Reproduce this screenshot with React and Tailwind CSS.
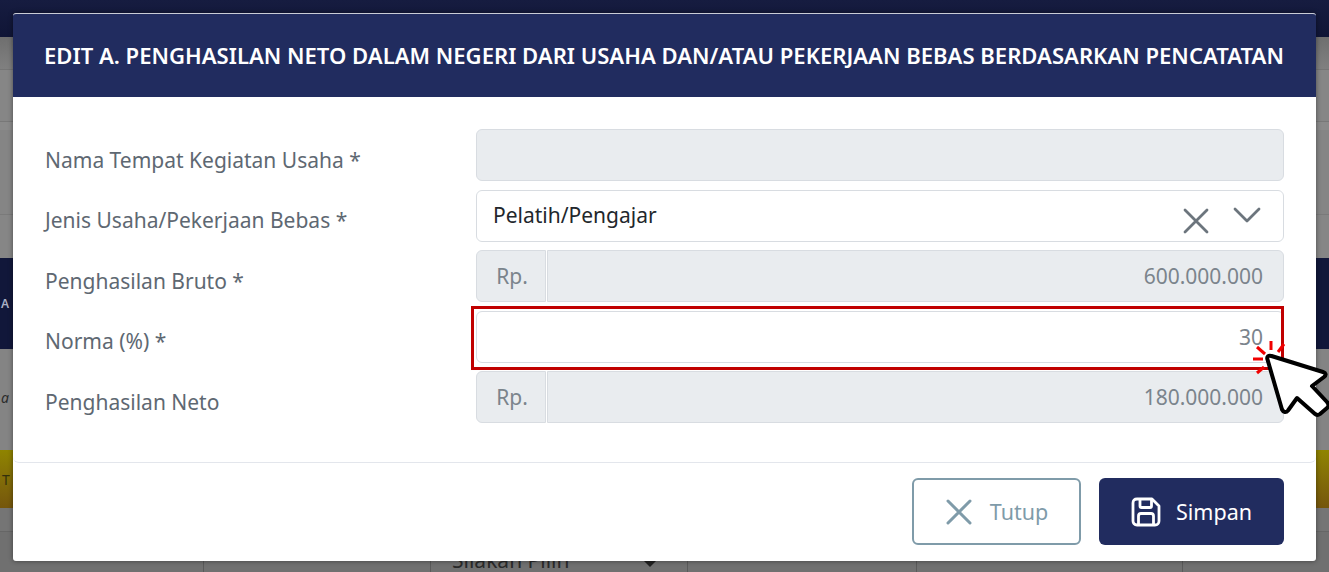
import React from "react";

function Label({ children }) {
  return <div className="h-[52px] flex items-center pt-[11px] text-[21px] text-[#5e6872] w-[431px] shrink-0">{children}</div>;
}

function AmountRow({ label, value }) {
  return (
    <div className="flex h-[60.5px]">
      <Label>{label}</Label>
      <div className="flex flex-1 h-[52px] gap-px">
        <div className="w-[70px] flex items-center justify-center pl-[2px] pt-[2px] bg-[#e9ecef] border border-[#d8dce1] rounded-l-md text-[21px] text-[#7b848c]">Rp.</div>
        <div className="flex-1 flex items-center justify-end pr-[20px] pt-[2px] bg-[#e9ecef] border border-[#d8dce1] rounded-r-md text-[21px] text-[#7b848c]">{value}</div>
      </div>
    </div>
  );
}

function Cursor() {
  return (
    <svg className="absolute left-[1250px] top-[338px]" width="80" height="80" viewBox="0 0 80 80" fill="none">
      <g stroke="#f00000" strokeWidth="3">
        <path d="M21 3V12" />
        <path d="M7 9L15 16" />
        <path d="M3 21H13" />
        <path d="M7 35L14 29" />
        <path d="M34 6L28 14" />
      </g>
      <path
        d="M17.500 21.500C16.500 18.500 18.500 17 21.500 18L73 34C76 35 76.500 37 74 39L62 48L77 64C79 66.500 79 68 77 70L70 76C68 77.500 66.500 77.500 64.500 75.500L47 60L38 72.500C36 75 33.500 74.500 32 71.500Z"
        fill="#fff"
        stroke="#000"
        strokeWidth="4"
        strokeLinejoin="round"
      />
    </svg>
  );
}

export default function App() {
  return (
    <div className="relative w-[1329px] h-[572px] overflow-hidden bg-[#7c7c7c] font-['Noto_Sans','Open_Sans',sans-serif]">
      {/* dimmed page behind the dialog */}
      <div className="flex flex-col h-full overflow-hidden">
        <div className="h-[37px] shrink-0 bg-gradient-to-b from-[#161c40] to-[#101536]" />
        <div className="h-[33px] shrink-0 bg-gradient-to-b from-[#6f6f6f] to-[#808080] border-b border-[#757575]" />
        <div className="h-[52px] shrink-0 bg-[#868686] border-b border-[#787878]" />
        <div className="h-[92px] shrink-0 bg-[#858585] border-t-[8px] border-[#8a8a8a]" />
        <div className="h-[44px] shrink-0 bg-[#868686] border-t border-[#7a7a7a]" />
        <div className="h-[91px] shrink-0 bg-[#11173a] flex items-center pl-px text-[#aab0c4] text-[12px] font-semibold">
          <span>A</span>
        </div>
        <div className="h-[101px] shrink-0 bg-[#848484] flex items-center pl-px text-[#2c2c2c] text-[14px] italic">
          <span className="-mt-[4px]">a</span>
        </div>
        <div className="h-[58px] shrink-0 bg-gradient-to-b from-[#8f8400] to-[#75560c] flex items-center pl-[2px] text-[#33300c] text-[14px]">
          <span>T</span>
        </div>
        <div className="h-[24px] shrink-0 bg-[#757575] border-b border-[#666666]" />
        <div className="flex-1 grid grid-cols-[203px_227px_257px_229px_266px_1fr] bg-[#707070]">
          <div />
          <div className="border-l border-[#5a5a5a]" />
          <div className="border-l border-[#5a5a5a]">
            <div className="pl-[21px] mt-[14px] text-[21px] leading-[28px] text-[#2a2a2a] whitespace-nowrap">Silakan Pilih</div>
          </div>
          <div className="border-l border-[#5a5a5a]" />
          <div className="border-l border-[#5a5a5a]" />
          <div className="border-l border-[#5a5a5a]" />
        </div>
      </div>

      {/* small select caret of the page behind, showing under the dialog */}
      <div className="absolute left-[644px] top-[561px] w-0 h-0 border-l-[6px] border-r-[6px] border-t-[6px] border-l-transparent border-r-transparent border-t-[#222222]" />

      {/* dialog */}
      <div className="absolute left-[13px] top-[13px] w-[1303px] h-[548px] bg-white rounded-[3px] flex flex-col overflow-hidden border-t border-[#c9ccd6] shadow-[0_0_5px_rgba(0,0,0,0.45)]">
        <div className="h-[83px] shrink-0 bg-[#212c5f] flex items-center pl-[31px] whitespace-nowrap text-white font-semibold text-[22.080px]">
          EDIT A. PENGHASILAN NETO DALAM NEGERI DARI USAHA DAN/ATAU PEKERJAAN BEBAS BERDASARKAN PENCATATAN
        </div>

        <div className="h-[366px] shrink-0 px-[32px] pt-[32px] border-b border-[#e3e6ec] rounded-b-md flex flex-col">
          <div className="flex h-[60.5px]">
            <Label>Nama Tempat Kegiatan Usaha *</Label>
            <div className="flex-1 h-[52px] bg-[#e9ecef] border border-[#d8dce1] rounded-md" />
          </div>
          <div className="flex h-[60.5px]">
            <Label>Jenis Usaha/Pekerjaan Bebas *</Label>
            <div className="flex-1 h-[52px] bg-white border border-[#d8dce1] rounded-md flex items-center pl-[16px] pr-[22px] text-[21px] text-[#22272c]">
              <span className="flex-1">Pelatih/Pengajar</span>
              <svg className="mt-[11px] mr-[23px]" width="28" height="28" viewBox="0 0 28 28" fill="none" stroke="#6c757d" strokeWidth="2.8" strokeLinecap="round">
                <path d="M3 3L25 25M25 3L3 25" />
              </svg>
              <svg className="mb-[1px]" width="28" height="17" viewBox="0 0 28 17" fill="none" stroke="#6c757d" strokeWidth="2.8" strokeLinecap="round" strokeLinejoin="round">
                <path d="M2 2L14 14L26 2" />
              </svg>
            </div>
          </div>
          <AmountRow label="Penghasilan Bruto *" value="600.000.000" />
          <div className="flex h-[60.5px]">
            <Label>Norma (%) *</Label>
            <div className="flex-1 h-[52px] bg-white border border-[#d8dce1] rounded-md flex items-center justify-end pr-[20px] pt-[2px] text-[21px] text-[#7b848c]">30</div>
          </div>
          <AmountRow label="Penghasilan Neto" value="180.000.000" />
        </div>

        <div className="flex-1 flex justify-end items-start gap-[18px] pt-[15px] pr-[32px]">
          <button className="w-[169px] h-[67px] flex items-center justify-center gap-[17px] border-2 border-[#7f9ba9] rounded-md text-[21.500px] text-[#7f9ba9]">
            <svg width="28" height="28" viewBox="0 0 28 28" fill="none" stroke="#7f9ba9" strokeWidth="3" strokeLinecap="round">
              <path d="M3 3L25 25M25 3L3 25" />
            </svg>
            <span className="pt-[2px]">Tutup</span>
          </button>
          <button className="w-[185px] h-[67px] flex items-center justify-center gap-[15px] bg-[#212c5f] rounded-md text-[21.500px] text-white">
            <svg width="30" height="30" viewBox="0 0 30 30" fill="none" stroke="#fff" strokeWidth="2.800" strokeLinejoin="round">
              <path d="M6 2H21L28 9V24C28 26 26.500 28 24 28H6C3.500 28 2 26 2 24V6C2 3.500 3.500 2 6 2Z" />
              <path d="M9 2V9C9 10 9.500 10.500 10.500 10.500H19C20 10.500 20.500 10 20.500 9V2" />
              <path d="M7.500 28V19C7.500 17.500 8.500 16.500 10 16.500H20C21.500 16.500 22.500 17.500 22.500 19V28" />
            </svg>
            <span className="pt-[2px]">Simpan</span>
          </button>
        </div>
      </div>

      {/* red highlight over the Norma field */}
      <div className="absolute left-[471px] top-[306px] w-[813px] h-[64px] border-[3px] border-[#c00000] pointer-events-none" />
      <Cursor />
    </div>
  );
}
